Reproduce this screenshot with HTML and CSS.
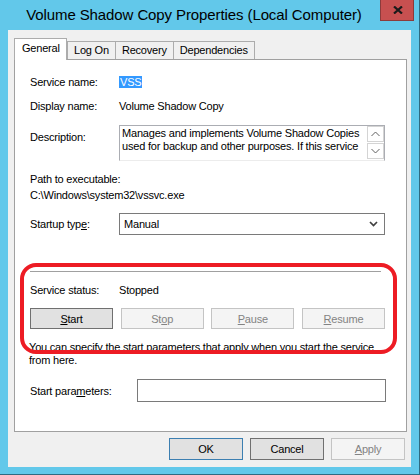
FILE: index.html
```html
<!DOCTYPE html>
<html lang="en">
<head>
    <meta charset="UTF-8">
    <title>Volume Shadow Copy Properties (Local Computer)</title>
    <link rel="stylesheet" href="styles.css">
</head>
<body>
    <div class="window">
        <div class="titlebar">
            <div class="title">Volume Shadow Copy Properties (Local Computer)</div>
            <div class="close">
                <svg width="10" height="8" viewBox="0 0 10 8"><path d="M1 0.5 L9 7.5 M9 0.5 L1 7.5" stroke="#1a1a1a" stroke-width="2.2" fill="none"/></svg>
            </div>
        </div>

        <div class="client">
            <div class="tabs">
                <div class="tab active">General</div>
                <div class="tab">Log On</div>
                <div class="tab">Recovery</div>
                <div class="tab">Dependencies</div>
            </div>

            <div class="panel">
                <div class="row row-name">
                    <span class="label">Service name:</span>
                    <span class="value"><span class="selected">VSS</span></span>
                </div>
                <div class="row row-display">
                    <span class="label">Display name:</span>
                    <span class="value">Volume Shadow Copy</span>
                </div>
                <div class="row row-desc">
                    <span class="label">Description:</span>
                    <div class="desc-box">
                        <div class="desc-text">Manages and implements Volume Shadow Copies<br>used for backup and other purposes. If this service</div>
                        <div class="scrollbar">
                            <div class="scroll-btn">
                                <svg width="9" height="6" viewBox="0 0 9 6"><path d="M0.5 5 L4.5 1 L8.5 5" stroke="#606060" stroke-width="1" fill="none"/></svg>
                            </div>
                            <div class="scroll-btn">
                                <svg width="9" height="6" viewBox="0 0 9 6"><path d="M0.5 1 L4.5 5 L8.5 1" stroke="#606060" stroke-width="1" fill="none"/></svg>
                            </div>
                        </div>
                    </div>
                </div>
                <div class="path-label">Path to executable:</div>
                <div class="path-value">C:\Windows\system32\vssvc.exe</div>
                <div class="row row-startup">
                    <span class="label">Startup typ<u>e</u>:</span>
                    <div class="select">
                        <span>Manual</span>
                        <svg width="9" height="6" viewBox="0 0 9 6"><path d="M1 1 L4.5 4.5 L8 1" stroke="#404040" stroke-width="1.7" fill="none"/></svg>
                    </div>
                </div>

                <div class="separator"></div>
                <div class="row row-status">
                    <span class="label">Service status:</span>
                    <span class="value">Stopped</span>
                </div>
                <div class="service-buttons">
                    <div class="btn btn-focus"><u>S</u>tart</div>
                    <div class="btn disabled">St<u>o</u>p</div>
                    <div class="btn disabled"><u>P</u>ause</div>
                    <div class="btn disabled"><u>R</u>esume</div>
                </div>
                <p class="hint">You can specify the start parameters that apply when you start the service<br>from here.</p>
                <div class="row row-params">
                    <span class="label">Start para<u>m</u>eters:</span>
                    <div class="input"></div>
                </div>

                <!-- красная рамка поверх группы -->
                <div class="highlight-ring"></div>
            </div>

            <div class="dialog-buttons">
                <div class="btn btn-default">OK</div>
                <div class="btn btn-focus">Cancel</div>
                <div class="btn disabled"><u>A</u>pply</div>
            </div>
        </div>
    </div>
</body>
</html>
```

FILE: styles.css
```css
body {
    margin: 0;
    font-family: 'Liberation Sans', Arial, sans-serif;
    font-size: 11px;
    letter-spacing: -0.2px;
    color: #000;
}
.window {
    width: 420px;
    height: 475px;
    box-sizing: border-box;
    background: #62c8ea;
    padding: 0 8px 7px 8px;
    border-right: 1px solid #2f6b82;
    border-bottom: 1px solid #2f6b82;
    display: flex;
    flex-direction: column;
}
.titlebar {
    margin: 0 -8px;
    padding-left: 8px;
    height: 30px;
    display: flex;
    align-items: flex-start;
    flex-shrink: 0;
}
.title {
    flex: 1;
    text-align: center;
    font-size: 15px;
    letter-spacing: -0.1px;
    line-height: 30px;
}
.close {
    width: 30px;
    height: 20px;
    background: #c75050;
    border: 1px solid #8c3b3b;
    border-top: none;
    margin-right: 5px;
    padding-left: 2px;
    display: flex;
    align-items: center;
    justify-content: center;
}
.client {
    flex: 1;
    background: #f0f0f0;
    padding: 8px 5px 0 6px;
}

/* Вкладки */
.tabs {
    display: flex;
    align-items: flex-end;
    height: 21px;
}
.tab {
    height: 18px;
    line-height: 17px;
    box-sizing: border-box;
    padding: 0 6px;
    border: 1px solid #acacac;
    border-bottom: none;
    margin-left: -1px;
    background: #f0f0f0;
}
.tab.active {
    height: 22px;
    line-height: 19px;
    margin-left: 0;
    margin-right: 1px;
    margin-bottom: -1px;
    padding: 0 7px;
    background: #fff;
    position: relative;
    z-index: 1;
    width: 53px;
}
.panel {
    position: relative;
    width: 393px;
    height: 373px;
    box-sizing: border-box;
    background: #fff;
    border: 1px solid #a0a0a0;
    padding: 0 20px 0 15px;
}
.row {
    display: flex;
    align-items: center;
}
.label {
    width: 89px;
    flex-shrink: 0;
    line-height: 14px;
}
.value {
    line-height: 14px;
}
.selected {
    background: #3399ff;
    color: #fff;
    padding: 0 1px;
}
.row-name {
    margin-top: 15px;
    height: 14px;
}
.row-display {
    margin-top: 10px;
    height: 14px;
}
.row-desc {
    margin-top: 12px;
    height: 36px;
    align-items: flex-start;
}
.row-desc .label {
    padding-top: 5px;
}
.desc-box {
    flex: 1;
    min-width: 0;
    height: 36px;
    box-sizing: border-box;
    border: 1px solid #abadb3;
    border-bottom-color: #ececec;
    display: flex;
    margin-right: 1px;
}
.desc-text {
    flex: 1;
    min-width: 0;
    margin: 1px 0 0 2px;
    line-height: 13px;
    white-space: nowrap;
}
.scrollbar {
    width: 17px;
    flex-shrink: 0;
    display: flex;
    flex-direction: column;
    gap: 1px;
}
.scroll-btn {
    height: 16px;
    box-sizing: border-box;
    border: 1px solid #d4d4d4;
    display: flex;
    align-items: center;
    justify-content: center;
}
.path-label {
    margin-top: 11px;
    line-height: 14px;
}
.path-value {
    margin-top: 2px;
    line-height: 14px;
}
.row-startup {
    margin-top: 11px;
    height: 22px;
}
.select {
    flex: 1;
    height: 22px;
    box-sizing: border-box;
    border: 1px solid #7a7a7a;
    margin-right: 1px;
    display: flex;
    align-items: center;
    justify-content: space-between;
    padding: 0 6px 0 4px;
}
.separator {
    margin-top: 36px;
    height: 1px;
    background: #a0a0a0;
    margin-right: 5px;
}
.row-status {
    margin-top: 11px;
    height: 14px;
}

/* Кнопки */
.btn {
    height: 21px;
    box-sizing: border-box;
    border: 1px solid #adadad;
    background: #e1e1e1;
    display: flex;
    align-items: center;
    justify-content: center;
}
.btn-focus {
    border-color: #707070;
}
.btn-default {
    border-color: #3c7fb1;
}
.btn.disabled {
    background: #f4f4f4;
    border-color: #c4c4c4;
    color: #838383;
}
.service-buttons {
    margin-top: 11px;
    display: flex;
    justify-content: space-between;
    margin-right: 1px;
}
.service-buttons .btn {
    width: 83px;
}
.hint {
    margin: 12px 0 0 -1px;
    line-height: 13px;
    white-space: nowrap;
}
.row-params {
    margin-top: 12px;
    height: 23px;
}
.row-params .label {
    width: 107px;
}
.input {
    flex: 1;
    height: 23px;
    box-sizing: border-box;
    border: 1px solid #7a7a7a;
}
.highlight-ring {
    position: absolute;
    left: 5px;
    top: 203px;
    width: 377px;
    height: 91px;
    box-sizing: border-box;
    border: 4px solid #ed1c24;
    border-radius: 16px;
}
.dialog-buttons {
    margin-top: 6px;
    display: flex;
    justify-content: flex-end;
    gap: 7px;
    padding-right: 1px;
}
.dialog-buttons .btn {
    width: 74px;
    height: 22px;
}
```
